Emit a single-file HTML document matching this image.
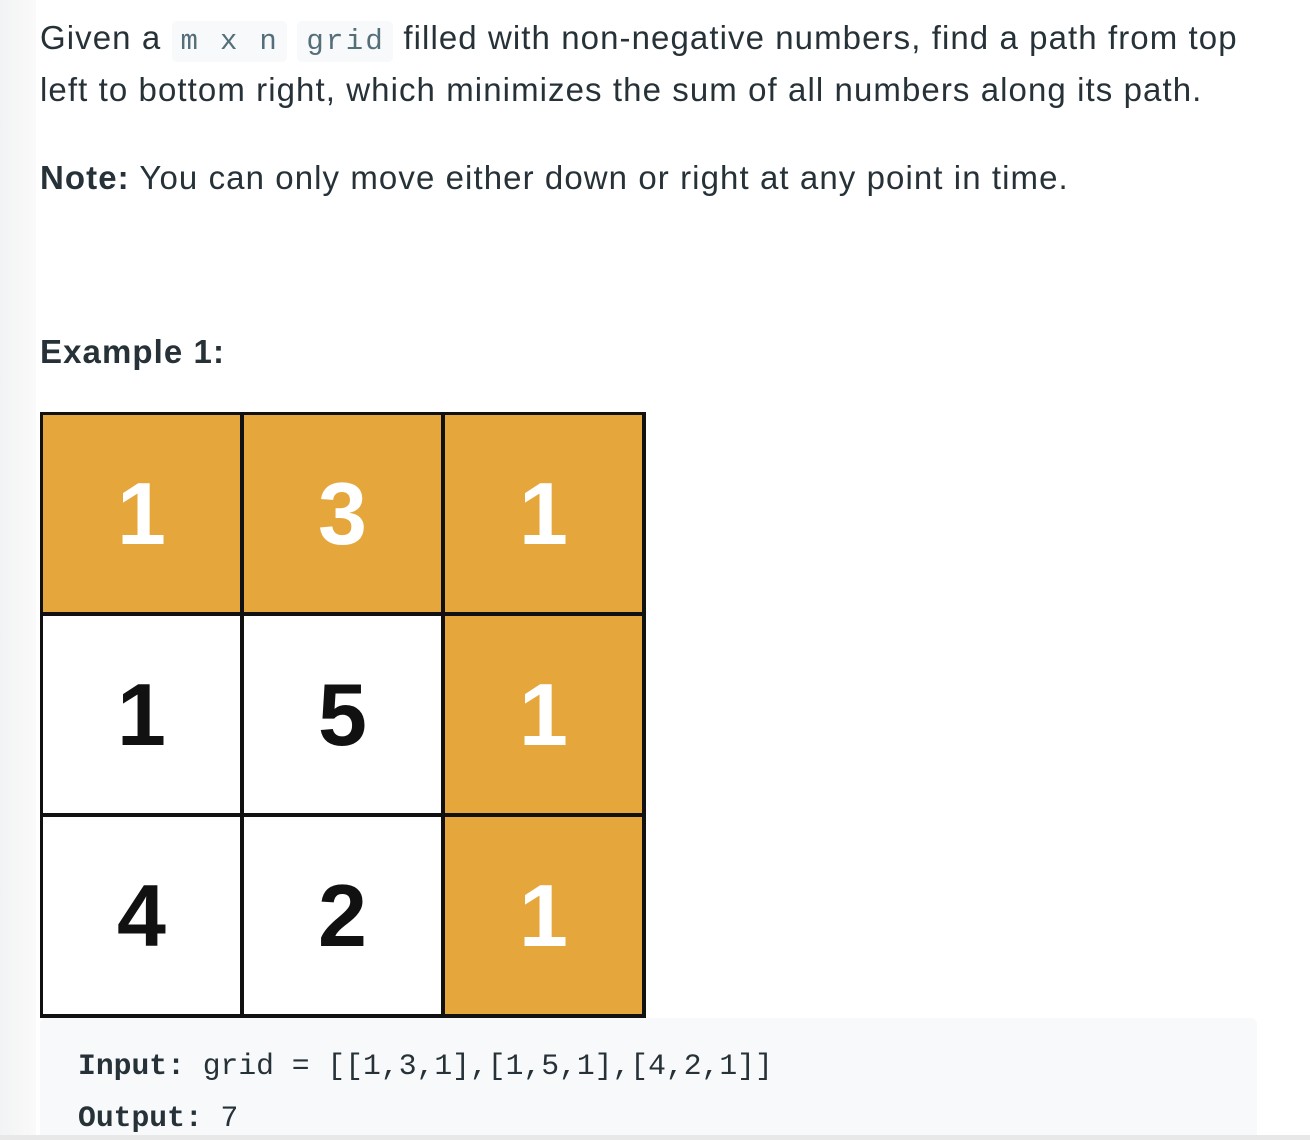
<!DOCTYPE html>
<html><head><meta charset="utf-8"><style>
html,body{margin:0;padding:0;width:1310px;height:1140px;overflow:hidden;background:#fff}
body{position:relative;font-family:"Liberation Sans",sans-serif;color:#263238}
.side{position:absolute;left:0;top:0;width:36px;height:1140px;background:linear-gradient(to right,#f2f3f4,#fafafa)}
.t{position:absolute;left:40px;font-size:33px;letter-spacing:1.08px;white-space:nowrap;line-height:52px}
code{font-family:"Liberation Mono",monospace;font-size:29px;letter-spacing:2.3px;background:#f7f9fa;color:#546e7a;padding:4px 8px 4px 9px;border-radius:5px}
.grid{position:absolute;left:40px;top:412px;width:606px;height:606px;background:#111}
.c{position:absolute;width:197px;height:197px;display:flex;align-items:center;justify-content:center;font-weight:bold;font-size:88px;font-family:"Liberation Sans",sans-serif}
.o{background:#e5a63b;color:#fff}.w{background:#fff;color:#111}
pre{position:absolute;left:40px;top:1018px;width:1217px;height:122px;margin:0;background:#f7f9fa;border-radius:6px;font-family:"Liberation Mono",monospace;font-size:29.7px;color:#263238;line-height:52px;padding:22px 0 0 38px;box-sizing:border-box}
.bl{position:absolute;left:0;top:1135px;width:1310px;height:5px;background:#e8e8e8}
</style></head><body>
<div class="side"></div>
<div class="t" style="top:12px">Given a <code>m x n</code> <code>grid</code> filled with non-negative numbers, find a path from top</div>
<div class="t" style="top:64px">left to bottom right, which minimizes the sum of all numbers along its path.</div>
<div class="t" style="top:152px"><b>Note:</b> You can only move either down or right at any point in time.</div>
<div class="t" style="top:326px;font-weight:bold">Example 1:</div>
<div class="grid">
<div class="c o" style="left:3px;top:3px">1</div>
<div class="c o" style="left:204px;top:3px">3</div>
<div class="c o" style="left:405px;top:3px">1</div>
<div class="c w" style="left:3px;top:204px">1</div>
<div class="c w" style="left:204px;top:204px">5</div>
<div class="c o" style="left:405px;top:204px">1</div>
<div class="c w" style="left:3px;top:405px">4</div>
<div class="c w" style="left:204px;top:405px">2</div>
<div class="c o" style="left:405px;top:405px">1</div>
</div>
<pre><b>Input:</b> grid = [[1,3,1],[1,5,1],[4,2,1]]
<b>Output:</b> 7</pre>
<div class="bl"></div>
</body></html>
